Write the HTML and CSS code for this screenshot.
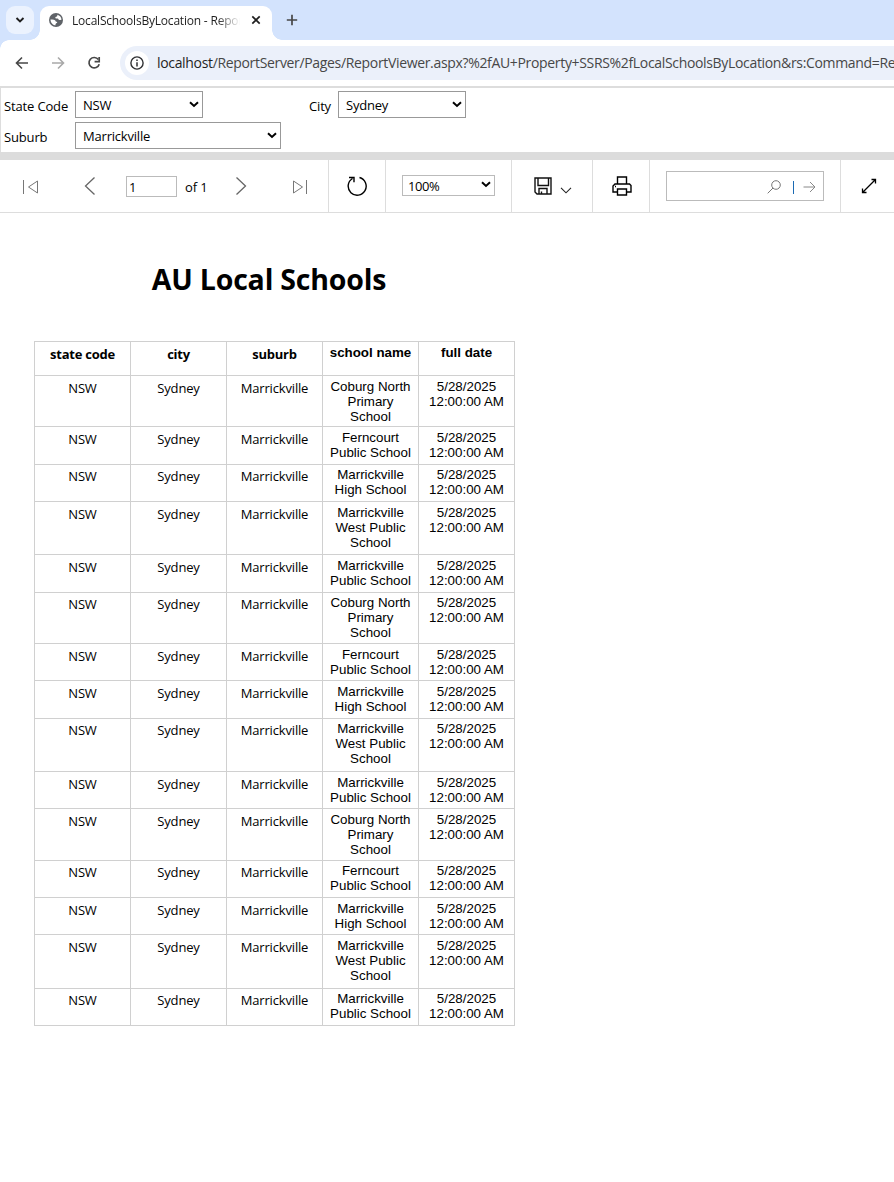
FILE: index.html
```html
<!DOCTYPE html>
<html lang="en">
<head>
<meta charset="utf-8">
<title>LocalSchoolsByLocation - Report Viewer</title>
<link rel="stylesheet" href="styles.css">
</head>
<body>
<header class="tabs">
  <div class="tab-search"><svg width="10" height="8" viewBox="0 0 10 8"><path d="M1.5 2 5 5.5 8.500 2" fill="none" stroke="#1f1f1f" stroke-width="1.9"/></svg></div>
  <div class="tab">
    <svg class="globe" width="14" height="14" viewBox="0 0 14 14"><circle cx="7" cy="7" r="7" fill="#5f6368"/><path d="M1.500 6.600C3 6.400 5 6.300 6 7.200c.8.8.4 1.500 1.700 1.600 1 .2.4 1.200-.5 1.500-.9.400-.4 1.300-1 2.100C3.500 12 1.500 9.500 1.500 6.600zM8.300 1.700c2.400.5 4.200 2.600 4.200 5.100-.8-.2-1.300.4-2.200.3-1-.2-.7-1.300-1.700-1.500-1.100-.2-2.200.2-2.300-.9-.1-1.200 1.800-.6 2-1.600z" fill="#fff"/></svg>
    <span class="tab-title">LocalSchoolsByLocation - Repor</span>
    <svg class="close" width="10" height="10" viewBox="0 0 10 10"><path d="M1.300 1.300 8.700 8.700M8.700 1.300 1.300 8.700" stroke="#1f1f1f" stroke-width="1.700"/></svg>
  </div>
  <svg class="plus" width="12" height="12" viewBox="0 0 12 12"><path d="M6 .8V11.200M.8 6H11.200" stroke="#474747" stroke-width="1.700"/></svg>
</header>
<nav class="address">
  <svg width="14" height="14" viewBox="0 0 14 14"><path d="M13 7H2M7 1.500 1.500 7 7 12.500" fill="none" stroke="#474747" stroke-width="1.600"/></svg>
  <svg width="14" height="14" viewBox="0 0 14 14"><path d="M1 7H12M7 1.500 12.500 7 7 12.500" fill="none" stroke="#a9a9a9" stroke-width="1.600"/></svg>
  <svg width="14" height="14" viewBox="0 0 14 14"><path d="M11.400 3.600A5.200 5.200 0 1 0 12.200 8.200" fill="none" stroke="#474747" stroke-width="1.700"/><path d="M12.200 1V5.600H7.600" fill="none" stroke="#474747" stroke-width="1.700"/></svg>
  <div class="omnibox">
    <span class="info"><svg width="14" height="14" viewBox="0 0 14 14"><circle cx="7" cy="7" r="6.100" fill="none" stroke="#303134" stroke-width="1.400"/><path d="M7 6.200V10.400M7 3.500V5" stroke="#303134" stroke-width="1.500"/></svg></span>
    <span class="url"><b>localhost</b>/ReportServer/Pages/ReportViewer.aspx?%2fAU+Property+SSRS%2fLocalSchoolsByLocation&amp;rs:Command=Re</span>
  </div>
</nav>
<section class="params">
  <span class="label">State Code</span>
  <div class="select">NSW<svg width="10" height="7" viewBox="0 0 10 7"><path d="M1 1.300 5 5 9 1.300" fill="none" stroke="#000" stroke-width="2"/></svg></div>
  <span class="label right">City</span>
  <div class="select">Sydney<svg width="10" height="7" viewBox="0 0 10 7"><path d="M1 1.300 5 5 9 1.300" fill="none" stroke="#000" stroke-width="2"/></svg></div>
  <span class="label">Suburb</span>
  <div class="select wide">Marrickville<svg width="10" height="7" viewBox="0 0 10 7"><path d="M1 1.300 5 5 9 1.300" fill="none" stroke="#000" stroke-width="2"/></svg></div>
</section>
<section class="toolbar">
  <div class="group pages">
    <svg class="first" width="16" height="16" viewBox="0 0 16 16"><path d="M.5 1V15M14.500 2V14L5.500 8Z" fill="none" stroke="#777"/></svg>
    <svg class="prev" width="12" height="20" viewBox="0 0 12 20"><path d="M10.500 1.500 1.500 10 10.500 18.500" fill="none" stroke="#666" stroke-width="1.300"/></svg>
    <span class="page-box">1</span>
    <span class="of">of 1</span>
    <svg class="next" width="12" height="20" viewBox="0 0 12 20"><path d="M1.500 1.500 10.500 10 1.500 18.500" fill="none" stroke="#666" stroke-width="1.300"/></svg>
    <svg class="last" width="16" height="16" viewBox="0 0 16 16"><path d="M14.500 1V15M1.500 2V14L10.500 8Z" fill="none" stroke="#777"/></svg>
  </div>
  <div class="group refresh"><svg width="20" height="20" viewBox="0 0 20 20"><path d="M12.500 1.500A9 9 0 1 1 5.500 2.500M2 1.500H7V6.300" fill="none" stroke="#000" stroke-width="1.400"/></svg></div>
  <div class="group zoom"><div class="select small">100%<svg width="10" height="7" viewBox="0 0 10 7"><path d="M1 1.300 5 5 9 1.300" fill="none" stroke="#000" stroke-width="2"/></svg></div></div>
  <div class="group save">
    <svg width="18" height="18" viewBox="0 0 18 18"><path d="M1 1H17V17H3L1 15ZM4 1V8.500H14.500V1M5 17V11.500H13V17M7.500 17V14.500" fill="none" stroke="#111" stroke-width="1.400"/></svg>
    <svg class="caret" width="12" height="7" viewBox="0 0 12 7"><path d="M1 .8 6 5.800 11 .8" fill="none" stroke="#222" stroke-width="1.100"/></svg>
  </div>
  <div class="group print"><svg width="20" height="20" viewBox="0 0 20 20"><path d="M5.500 8V1H14.500V8M5 16H1V10L3 8H17.500L19 9.500V16H15M5.500 13H14.500V19H5.500ZM3 10.500H4" fill="none" stroke="#000" stroke-width="1.400"/></svg></div>
  <div class="group find"><div class="find-box">
    <svg width="14" height="14" viewBox="0 0 14 14"><circle cx="9" cy="5" r="4.300" fill="none" stroke="#777"/><path d="M6 8 .7 13.300" stroke="#777"/></svg>
    <i class="bar"></i>
    <svg width="13" height="12" viewBox="0 0 13 12"><path d="M.5 6H12M7 1 12 6 7 11" fill="none" stroke="#888"/></svg>
  </div></div>
  <div class="group expand"><svg width="16" height="16" viewBox="0 0 16 16"><path d="M1.500 14.500 14.500 1.500M10.500 1.500H14.500V5.500M1.500 10.500V14.500H5.500" fill="none" stroke="#000" stroke-width="1.300"/></svg></div>
</section>
<main class="report">
  <h1>AU Local Schools</h1>
  <table class="grid">
    <thead><tr class="head"><th>state code</th><th>city</th><th>suburb</th><th class="alt">school name</th><th class="alt">full date</th></tr></thead>
    <tbody id="rows"></tbody>
  </table>
</main>
<script src="rows.js"></script>
</body>
</html>
```
FILE: styles.css
```css
* { box-sizing: border-box; }
body { margin: 0; width: 894px; height: 1182px; overflow: hidden; background: #fff; color: #000; font: 13px/18px "Open Sans", sans-serif; }
svg { display: block; flex: none; }
.tabs { height: 40px; background: #d3e3fd; display: flex; position: relative; }
.tabs::after { content: ""; position: absolute; left: 0; bottom: 0; width: 9px; height: 9px; transform: translateY(9px); background: radial-gradient(circle at 100% 100%, transparent 8.5px, #d3e3fd 9px); }
.tab-search { width: 28px; height: 28px; margin: 6px 6px 0 6px; border-radius: 9px; background: #ebf2fe; display: flex; align-items: center; justify-content: center; }
.tab { position: relative; width: 232px; height: 34px; margin-top: 6px; border-radius: 9px 9px 0 0; background: #fff; display: flex; align-items: center; padding: 0 11px 6px 9px; }
.tab::before, .tab::after { content: ""; position: absolute; bottom: 0; width: 10px; height: 10px; }
.tab::before { left: -10px; background: radial-gradient(circle at 0 0, transparent 9.500px, #fff 10px); }
.tab::after { right: -10px; background: radial-gradient(circle at 100% 0, transparent 9.500px, #fff 10px); }
.tab-title { margin-left: 9px; width: 170px; white-space: nowrap; font-size: 12px; line-height: 18px; padding-top: 1px; color: #1f1f1f; letter-spacing: -.2px; -webkit-mask-image: linear-gradient(90deg, #000 145px, transparent 168px); }
.close { margin-left: auto; }
.plus { margin: 14px 0 0 14px; }
.address { height: 46px; display: flex; align-items: center; padding-left: 15px; gap: 22px; }
.omnibox { height: 34px; width: 774px; flex: none; margin-left: -3px; border-radius: 17px 0 0 17px; background: #ebf0fa; display: flex; align-items: center; }
.info { width: 24px; height: 24px; margin-left: 5px; border-radius: 50%; background: #fff; display: flex; align-items: center; justify-content: center; flex: none; }
.url { margin-left: 8px; white-space: nowrap; color: #474747; font-size: 14px; letter-spacing: -.334px; }
.url b { font-weight: 400; color: #1f1f1f; }
.params { height: 66px; border-top: 2px solid #ddd; border-left: 1px solid #ddd; padding: 3px 0 0 3px; display: grid; grid-template-columns: 71px 206px 57px 128px; grid-template-rows: 27px 27px; row-gap: 4px; }
.label { align-self: center; padding-top: 2px; letter-spacing: -.15px; }
.label.right { text-align: right; padding-right: 7px; }
.select { width: 128px; height: 27px; border: 1px solid #999; padding: 1px 3px 0 7px; display: flex; align-items: center; justify-content: space-between; letter-spacing: -.2px; }
.select svg { margin-top: -2px; }
.select.wide { width: 206px; }
.toolbar { height: 61px; border-top: 8px solid #dcdcdc; border-bottom: 1px solid #ddd; display: flex; }
.group { flex: none; display: flex; align-items: center; justify-content: center; border-right: 1px solid #ddd; }
.pages { width: 329px; justify-content: flex-start; padding-left: 23px; }
.prev { margin-left: 45px; }
.page-box { width: 51px; height: 21px; margin-left: 30px; padding-left: 2px; border: 1px solid #bbb; line-height: 20px; }
.of { width: 26px; margin: 1px 0 0 8px; letter-spacing: -.1px; }
.next { margin-left: 24px; }
.last { margin-left: 45px; }
.first, .last { margin-top: 1px; }
.refresh { width: 57px; }
.zoom { width: 126px; }
.select.small { width: 93px; height: 21px; padding-left: 5px; border-color: #bbb; margin-top: -2px; letter-spacing: -.4px; }
.save { width: 81px; gap: 8px; padding-left: 1px; }
.caret { margin-top: 9px; }
.print { width: 57px; padding-left: 1px; }
.find { width: 191px; padding-right: 1px; }
.find-box { width: 158px; height: 30px; margin-top: -1px; border: 1px solid #bbb; display: flex; align-items: center; justify-content: flex-end; padding: 2px 7px 0 0; }
.bar { width: 1px; height: 13px; background: #1b6ab3; margin: 2px 9px 0 12px; }
.expand { width: 57px; border-right: 0; padding-right: 1px; }
.report { padding: 46px 0 0 34px; }
h1 { margin: 0 0 42px; width: 470px; text-align: center; font-size: 28.500px; line-height: 40px; letter-spacing: -.2px; font-weight: 700; }
.grid { border-collapse: collapse; table-layout: fixed; width: 481px; }
.grid th, .grid td { border: 1px solid #d0d0d0; width: 96px; padding: 3px 3px 0; vertical-align: top; text-align: center; letter-spacing: -.17px; }
.grid th { letter-spacing: -.25px; }
.grid .alt { padding: 3px 5px 0; font-family: "Liberation Sans", sans-serif; font-size: 13.333px; line-height: 15px; letter-spacing: 0; }
.grid tbody tr:nth-child(3n) td { padding-top: 2px; }
.head { height: 34px; }
```
FILE: rows.js
```js
const schools = [
  "Coburg North<br>Primary<br>School",
  "Ferncourt<br>Public School",
  "Marrickville<br>High School",
  "Marrickville<br>West Public<br>School",
  "Marrickville<br>Public School"
];
const heights = [51, 38, 37, 53, 38, 51, 37, 38, 53, 37, 52, 37, 37, 54, 37];
document.getElementById("rows").innerHTML = heights.map((h, i) =>
  `<tr style="height:${h}px"><td>NSW</td><td>Sydney</td><td>Marrickville</td><td class="alt">${schools[i % 5]}</td><td class="alt">5/28/2025<br>12:00:00 AM</td></tr>`
).join("");
```
